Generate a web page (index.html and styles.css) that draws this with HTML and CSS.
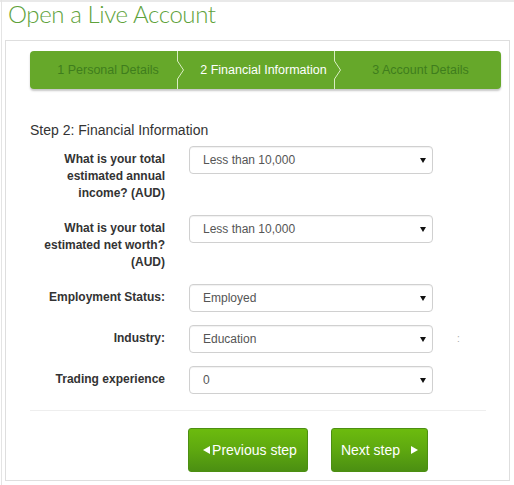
FILE: index.html
```html
<!DOCTYPE html>
<html>
<head>
<meta charset="utf-8">
<link rel="stylesheet" href="styles.css">
</head>
<body>
<div class="page">
  <h1 class="title">Open a Live Account</h1>
  <div class="panel">
    <div class="steps">
      <div class="step step-1">1 Personal Details</div>
      <div class="step step-2 active">
        <svg class="chev" width="8" height="38" viewBox="0 0 8 38"><polyline points="0.5,0 0.5,10 6.5,19 0.5,28 0.5,38" fill="none" stroke="#d9edc2" stroke-width="1"/></svg>
        2 Financial Information</div>
      <div class="step step-3">
        <svg class="chev" width="8" height="38" viewBox="0 0 8 38"><polyline points="0.5,0 0.5,10 6.5,19 0.5,28 0.5,38" fill="none" stroke="#d9edc2" stroke-width="1"/></svg>
        3 Account Details</div>
    </div>

    <h2 class="step-title">Step 2: Financial Information</h2>

    <form class="form">
      <label class="label">What is your total estimated annual income? (AUD)</label>
      <div class="select-wrap"><select class="select"><option>Less than 10,000</option></select><svg class="arrow" width="6" height="5" viewBox="0 0 6 5"><polygon points="0,0 6,0 3,5" fill="#111"/></svg></div>
      <span></span>

      <label class="label">What is your total estimated net worth? (AUD)</label>
      <div class="select-wrap"><select class="select"><option>Less than 10,000</option></select><svg class="arrow" width="6" height="5" viewBox="0 0 6 5"><polygon points="0,0 6,0 3,5" fill="#111"/></svg></div>
      <span></span>

      <label class="label">Employment Status:</label>
      <div class="select-wrap"><select class="select"><option>Employed</option></select><svg class="arrow" width="6" height="5" viewBox="0 0 6 5"><polygon points="0,0 6,0 3,5" fill="#111"/></svg></div>
      <span></span>

      <label class="label">Industry:</label>
      <div class="select-wrap"><select class="select"><option>Education</option></select><svg class="arrow" width="6" height="5" viewBox="0 0 6 5"><polygon points="0,0 6,0 3,5" fill="#111"/></svg></div>
      <span class="colon">:</span>

      <label class="label">Trading experience</label>
      <div class="select-wrap"><select class="select"><option>0</option></select><svg class="arrow" width="6" height="5" viewBox="0 0 6 5"><polygon points="0,0 6,0 3,5" fill="#111"/></svg></div>
      <span></span>
    </form>

    <div class="divider"></div>

    <div class="actions">
      <button class="btn btn-prev" type="button"><svg width="7" height="8" viewBox="0 0 7 8"><polygon points="7,0 7,8 0,4" fill="#fff"/></svg><span>Previous step</span></button>
      <button class="btn btn-next" type="button"><span>Next step</span><svg width="7" height="8" viewBox="0 0 7 8"><polygon points="0,0 0,8 7,4" fill="#fff"/></svg></button>
    </div>
  </div>
</div>
</body>
</html>
```

FILE: styles.css
```css
html, body {
  margin: 0;
  padding: 0;
}

body {
  font-family: "Liberation Sans", Arial, sans-serif;
  color: #333;
  background: linear-gradient(to bottom, #e9e9e9 0, #e9e9e9 2px, #fff 2px, #fff 100%);
}

.page {
  margin-left: 1px;
  border-left: 1px solid #e4e4e4;
  min-height: 485px;
  box-sizing: border-box;
}

.title {
  margin: 0 0 12px 6px;
  font-family: "Lato", sans-serif;
  font-weight: 300;
  font-size: 24px;
  line-height: 28px;
  letter-spacing: -0.4px;
  color: #5ea23b;
}

.panel {
  margin: 0 4px 0 3px;
  border: 1px solid #dedede;
  padding: 10px 0 8px 24px;
  background: #fff;
}

.steps {
  display: flex;
  height: 38px;
  margin-right: 8px;
  background: #66a82a;
  border-radius: 4px;
  box-shadow: 0 2px 2px rgba(0, 0, 0, 0.22);
}

.step {
  position: relative;
  box-sizing: border-box;
  text-align: center;
  font-size: 12.5px;
  line-height: 38px;
  color: #3f7d1d;
  white-space: nowrap;
}

.step-1 { width: 147px; padding-left: 9px; }
.step-2 { width: 157px; padding-left: 16px; }
.step-3 { flex: 1; padding-left: 6px; }

.step.active { color: #fff; }

.chev {
  position: absolute;
  left: 0;
  top: 0;
}

.step-title {
  margin: 31px 0 6px 0;
  font-size: 14px;
  font-weight: normal;
  line-height: 20px;
  color: #333;
}

.form {
  display: grid;
  grid-template-columns: 135px 244px auto;
  column-gap: 24px;
  row-gap: 13px;
  align-items: start;
}

.label {
  padding-top: 5px;
  text-align: right;
  font-size: 12px;
  font-weight: bold;
  line-height: 17px;
  color: #333;
}

.select-wrap {
  position: relative;
  height: 28px;
}

.select {
  -webkit-appearance: none;
  appearance: none;
  width: 100%;
  height: 28px;
  box-sizing: border-box;
  margin: 0;
  padding: 0 20px 0 13px;
  border: 1px solid #d0d0d0;
  border-radius: 4px;
  background: #fff;
  box-shadow: inset 0 1px 1px rgba(0, 0, 0, 0.06);
  font-family: "Liberation Sans", Arial, sans-serif;
  font-size: 12px;
  color: #555;
}

.arrow {
  position: absolute;
  right: 7px;
  top: 12px;
}

.colon {
  font-size: 10px;
  color: #aaa;
  line-height: 28px;
}

.divider {
  margin: 16px 23px 0 0;
  border-top: 1px solid #eeeeee;
}

.actions {
  display: flex;
  gap: 23px;
  margin: 17px 0 0 158px;
}

.btn {
  display: flex;
  align-items: center;
  justify-content: center;
  height: 44px;
  box-sizing: border-box;
  border: 1px solid #4c8f12;
  border-radius: 3px;
  background: linear-gradient(to bottom, #6cbb0e 0%, #5ea810 50%, #4b8f12 100%);
  color: #fff;
  font-family: "Liberation Sans", Arial, sans-serif;
  font-size: 14px;
  cursor: pointer;
  padding: 0;
}

.btn-prev {
  width: 120px;
  gap: 2px;
  padding-left: 4px;
}

.btn-next {
  width: 97px;
  gap: 11px;
}
```
